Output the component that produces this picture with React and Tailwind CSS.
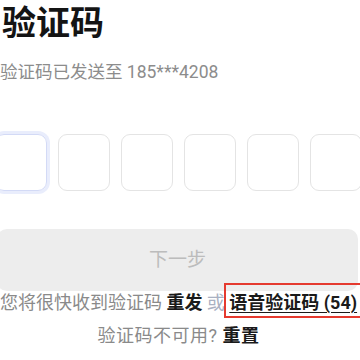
import React from 'react';

const font = "font-['Roboto','Noto_Sans_CJK_SC',sans-serif]";

const CodeBox = ({ active }) => (
    <div
        className={
            active
                ? 'w-[52px] h-[57px] shrink-0 rounded-[9px] border-[1.5px] border-[#d3daf6] shadow-[0_0_0_3px_#e9edfc]'
                : 'w-[52px] h-[57px] shrink-0 rounded-[9px] border-[1.5px] border-[#e4e4e4]'
        }
    />
);

const App = () => {
    return (
        <div className={`w-[360px] h-[360px] overflow-hidden bg-white relative ${font}`}>
            <div className="-ml-[5px] w-[367px]">
                <h1 className="pl-[7px] pt-[2px] text-[34px] leading-[42px] font-bold text-[#141414]">验证码</h1>
                <p className="pl-[5px] mt-[17px] text-[17.5px] leading-[22px] text-[#8c8c8c]">验证码已发送至 185***4208</p>

                <div className="mt-[51px] flex gap-[11px]">
                    <CodeBox active />
                    <CodeBox />
                    <CodeBox />
                    <CodeBox />
                    <CodeBox />
                    <CodeBox />
                </div>

                <button className="mt-[38px] ml-[2px] w-[361px] h-[62px] rounded-[10px] bg-[#ededed] text-[#bcbcbc] text-[19px]">
                    下一步
                </button>

                <p className="mt-[1px] text-center text-[18px] leading-[22px] text-[#8a8a8a] whitespace-nowrap">
                    您将很快收到验证码 <span className="font-bold text-[#1a1a1a]">重发</span>{' '}
                    <span className="text-[#a9b1c2]">或</span>{' '}
                    <span className="font-bold text-[#1a1a1a] underline underline-offset-[3px]">语音验证码 (54)</span>
                </p>
                <p className="mt-[11px] text-center text-[18px] leading-[22px] tracking-[0.5px] text-[#8a8a8a]">
                    验证码不可用? <span className="font-bold text-[#1a1a1a]">重置</span>
                </p>
            </div>

            <div className="absolute left-[224px] top-[283px] w-[140px] h-[35px] border-2 border-[#e53a2f]" />
        </div>
    );
};

export default App;
